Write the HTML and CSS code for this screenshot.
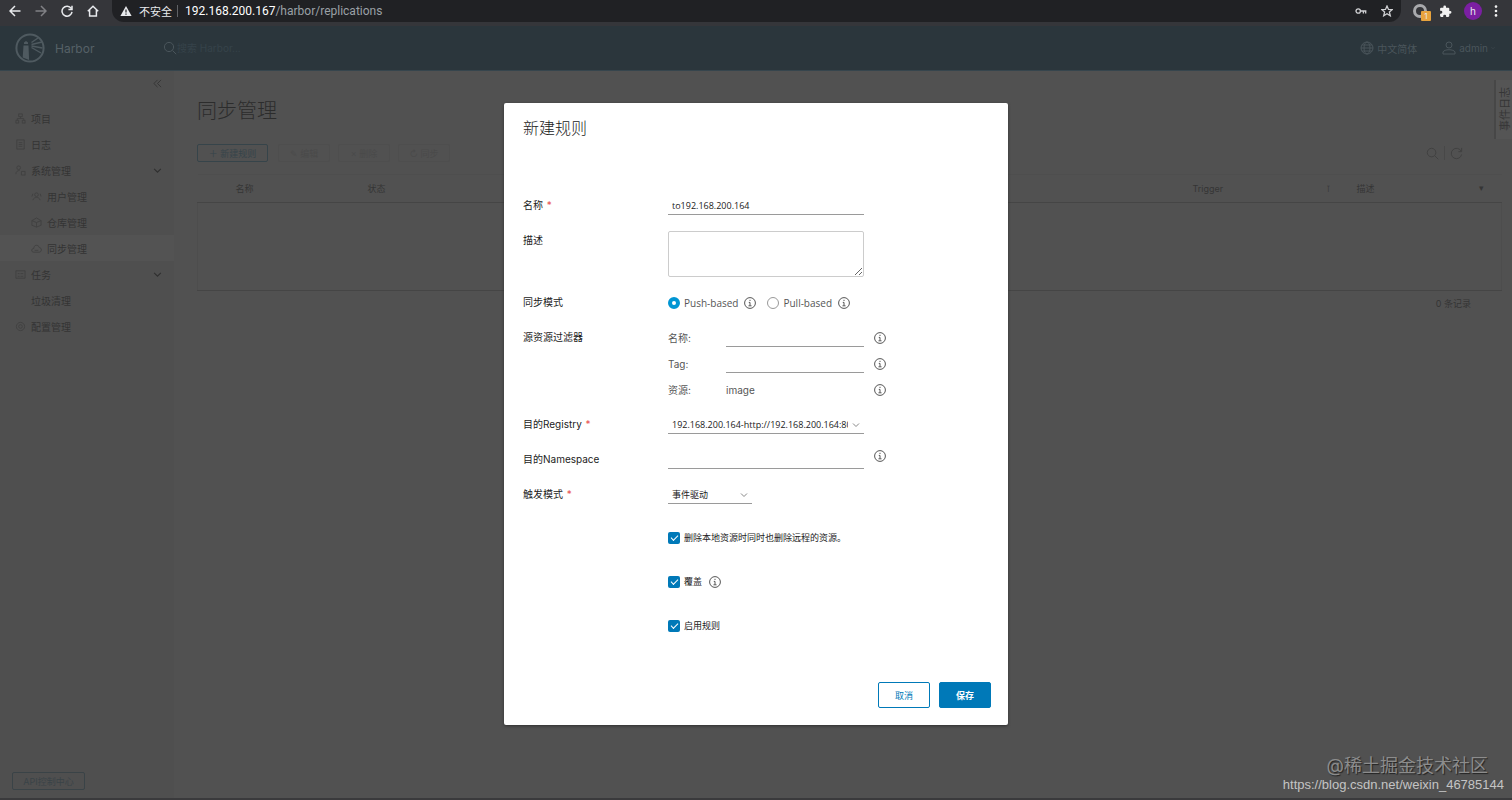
FILE: index.html
```html
<!DOCTYPE html>
<html lang="zh-CN">
<head>
    <meta charset="UTF-8">
    <meta name="viewport" content="width=device-width, initial-scale=1.0">
    <title>Harbor</title>
    <link rel="stylesheet" href="styles.css">
</head>
<body>
    <svg class="sprite" aria-hidden="true">
        <symbol id="info" viewBox="0 0 12 12"><circle cx="6" cy="6" r="5.400"/><path d="M6 2.800v1.200M4.800 5.400H6v3.200M4.500 8.800h3"/></symbol>
        <symbol id="down" viewBox="0 0 8 8"><path d="M1 2.500l3 3 3-3"/></symbol>
        <symbol id="search" viewBox="0 0 14 14"><circle cx="6" cy="6" r="4.600"/><path d="M9.500 9.500l3.700 3.700"/></symbol>
    </svg>

    <div class="browser">
        <button class="nav-btn" aria-label="后退"><svg viewBox="0 0 12 12"><path d="M11.500 6H1M6 1L1 6l5 5"/></svg></button>
        <button class="nav-btn muted" aria-label="前进"><svg viewBox="0 0 12 12"><path d="M.5 6H11M6 1l5 5-5 5"/></svg></button>
        <button class="nav-btn" aria-label="刷新"><svg viewBox="0 0 12 12"><path d="M10.200 3.400A5 5 0 1 0 11 6.800M11 .8v3.600H7.400"/></svg></button>
        <button class="nav-btn" aria-label="主页"><svg viewBox="0 0 12 12"><path d="M.8 6.200L6 1.200l5.200 5M2.600 5v6h6.800V5"/></svg></button>
        <div class="address">
            <svg class="warn" viewBox="0 0 12 12"><path d="M6 1l5.600 10H.4z" fill="#e8eaed"/><path d="M6 4.600v3M6 8.600v1.200" stroke="#202124" stroke-width="1.200"/></svg>
            <span class="insecure">不安全</span>
            <span class="bar"></span>
            <span class="url"><b>192.168.200.167</b>/harbor/replications</span>
            <svg class="key" viewBox="0 0 12 12"><circle cx="3.200" cy="6" r="2.200"/><path d="M5.400 6h6M8.400 6v2.500M10.700 6v2.500"/></svg>
            <svg class="star" viewBox="0 0 12 12"><path d="M6 1l1.500 3.400 3.700.3-2.800 2.400.9 3.700L6 8.800l-3.300 2 .9-3.700L.8 4.700l3.700-.3z"/></svg>
        </div>
        <div class="extensions">
            <span class="ext-ring"><i>1</i></span>
            <svg class="puzzle" viewBox="0 0 24 24"><path d="M20.500 11H19V7a2 2 0 0 0-2-2h-4V3.500a2.500 2.500 0 0 0-5 0V5H4a2 2 0 0 0-2 2v3.800h1.500a2.700 2.700 0 0 1 0 5.400H2V20c0 1.100.9 2 2 2h3.800v-1.500a2.700 2.700 0 0 1 5.400 0V22H17a2 2 0 0 0 2-2v-4h1.500a2.500 2.500 0 0 0 0-5z"/></svg>
            <span class="avatar">h</span>
            <svg class="dots" viewBox="0 0 4 12"><circle cx="2" cy="1.600" r="1.300"/><circle cx="2" cy="6" r="1.300"/><circle cx="2" cy="10.400" r="1.300"/></svg>
        </div>
    </div>

    <div class="app">
        <header class="header">
            <svg class="logo" viewBox="0 0 30 30"><circle cx="15" cy="15" r="13.600"/><path class="solid" d="M8.500 12.500h5l.6 14.500-6.400-2.500zM9 11V9.500L11 8l2 1.500V11z"/><path class="beam" d="M16.500 9.500L23 5M16.500 11.500L27 9M16.500 13l11 2M16.500 14.500L26 20"/></svg>
            <span class="brand">Harbor</span>
            <label class="search"><svg class="line"><use href="#search"/></svg><input type="text" placeholder="搜索 Harbor..." aria-label="搜索"></label>
            <a class="head-link" href="#"><svg class="line" viewBox="0 0 14 14"><circle cx="7" cy="7" r="6"/><ellipse cx="7" cy="7" rx="3" ry="6"/><path d="M1 7h12M2 4h10M2 10h10"/></svg>中文简体</a>
            <a class="head-link" href="#"><svg class="line" viewBox="0 0 14 14"><circle cx="7" cy="4" r="3"/><path d="M1 13v-2c1-3 11-3 12 0v2z"/></svg>admin<svg class="caret line"><use href="#down"/></svg></a>
        </header>

        <div class="content">
            <nav class="sidebar">
                <button class="collapse" aria-label="收起"><svg class="line" viewBox="0 0 10 10"><path d="M5 1L1 5l4 4M9 1L5 5l4 4"/></svg></button>
                <a href="#"><svg class="line" viewBox="0 0 12 12"><path d="M4 1h4v3H4zM1 8h3v3H1zM8 8h3v3H8zM6 4v2M2.500 8V6h7v2"/></svg>项目</a>
                <a href="#"><svg class="line" viewBox="0 0 12 12"><path d="M2 1h8v10H2zM4 4h4M4 6h4M4 8h4"/></svg>日志</a>
                <a href="#"><svg class="line" viewBox="0 0 12 12"><circle cx="4" cy="3" r="2"/><path d="M1 10c0-3 2-4 4-4M7 7h4v4H7z"/></svg>系统管理<svg class="caret line"><use href="#down"/></svg></a>
                <a class="sub" href="#"><svg class="line" viewBox="0 0 12 12"><circle cx="6" cy="4" r="2"/><path d="M2 10c1-4 7-4 8 0M1 6l1-3M11 6l-1-3"/></svg>用户管理</a>
                <a class="sub" href="#"><svg class="line" viewBox="0 0 12 12"><path d="M6 1l5 3v5l-5 2-5-2V4zM1 4l5 2 5-2M6 6v5"/></svg>仓库管理</a>
                <a class="sub active" href="#"><svg class="line" viewBox="0 0 12 12"><path d="M3 10C0 10 0 6 3 6c0-5 6-4 6-1 3 0 3 5 0 5zM4 8h4"/></svg>同步管理</a>
                <a href="#"><svg class="line" viewBox="0 0 12 12"><path d="M1 2h10v8H1zM3 5h2M6 5h3M3 8h2M6 8h3"/></svg>任务<svg class="caret line"><use href="#down"/></svg></a>
                <a class="sub" href="#">垃圾清理</a>
                <a href="#"><svg class="line" viewBox="0 0 12 12"><circle cx="6" cy="6" r="4.500"/><circle cx="6" cy="6" r="2"/></svg>配置管理</a>
                <button class="api">API控制中心</button>
            </nav>

            <main class="main">
                <h1>同步管理</h1>
                <div class="toolbar">
                    <button class="primary">＋ 新建规则</button>
                    <button disabled>✎ 编辑</button>
                    <button disabled>× 删除</button>
                    <button disabled>↻ 同步</button>
                    <span class="tools"><svg class="line"><use href="#search"/></svg><i></i><svg class="line" viewBox="0 0 14 14"><path d="M12 4.500A5.600 5.600 0 1 0 12.500 8M12.500 1v4H9"/></svg></span>
                </div>
                <table class="grid">
                    <colgroup><col class="c1"><col class="c2"><col><col class="c4"><col class="c5"></colgroup>
                    <thead>
                        <tr><th>名称</th><th>状态</th><th></th><th>Trigger <small>⊺</small></th><th>描述 <small>▾</small></th></tr>
                    </thead>
                    <tbody><tr><td colspan="5"></td></tr></tbody>
                </table>
                <div class="records">0 条记录</div>
            </main>
            <button class="events">事件日志</button>
        </div>

        <div class="backdrop">
            <form class="modal" onsubmit="return false">
                <h2>新建规则</h2>
                <div class="fields">
                    <div class="row">
                        <label class="label" for="name">名称 <em>*</em></label>
                        <input class="text" id="name" type="text" value="to192.168.200.164">
                    </div>
                    <div class="row tall">
                        <label class="label" for="desc">描述</label>
                        <textarea id="desc"></textarea>
                    </div>
                    <div class="row">
                        <span class="label">同步模式</span>
                        <label class="radio"><input type="radio" name="mode" checked>Push-based</label>
                        <svg class="info push"><use href="#info"/></svg>
                        <label class="radio"><input type="radio" name="mode">Pull-based</label>
                        <svg class="info"><use href="#info"/></svg>
                    </div>
                    <div class="filters">
                        <span class="label">源资源过滤器</span>
                        <div class="filter-list">
                            <div class="row"><label class="small" for="f-name">名称:</label><input class="text" id="f-name" type="text"><svg class="info side"><use href="#info"/></svg></div>
                            <div class="row"><label class="small" for="f-tag">Tag:</label><input class="text" id="f-tag" type="text"><svg class="info side"><use href="#info"/></svg></div>
                            <div class="row"><span class="small">资源:</span><span class="value">image</span><svg class="info side"><use href="#info"/></svg></div>
                        </div>
                    </div>
                    <div class="row">
                        <label class="label" for="registry">目的Registry <em>*</em></label>
                        <span class="select"><select id="registry"><option>192.168.200.164-http://192.168.200.164:80</option></select><svg class="caret line"><use href="#down"/></svg></span>
                    </div>
                    <div class="row">
                        <label class="label" for="ns">目的Namespace</label>
                        <input class="text" id="ns" type="text">
                        <svg class="info side top"><use href="#info"/></svg>
                    </div>
                    <div class="row">
                        <label class="label" for="trigger">触发模式 <em>*</em></label>
                        <span class="select short"><select id="trigger"><option>事件驱动</option></select><svg class="caret line"><use href="#down"/></svg></span>
                    </div>
                </div>
                <div class="checks">
                    <label class="check"><input type="checkbox" checked>删除本地资源时同时也删除远程的资源。</label>
                    <label class="check"><input type="checkbox" checked>覆盖<svg class="info"><use href="#info"/></svg></label>
                    <label class="check"><input type="checkbox" checked>启用规则</label>
                </div>
                <div class="actions">
                    <button type="button" class="btn">取消</button>
                    <button type="submit" class="btn save">保存</button>
                </div>
            </form>
        </div>

        <div class="watermark">
            <span class="mark">@稀土掘金技术社区</span>
            <span class="link">https://blog.csdn.net/weixin_46785144</span>
        </div>
    </div>
</body>
</html>
```

FILE: styles.css
```css
* {
    box-sizing: border-box;
}

body {
    margin: 0;
    min-height: 100vh;
    display: flex;
    flex-direction: column;
    background: #515151;
    color: #353535;
    font-family: Inter, "Noto Sans CJK SC", sans-serif;
    font-size: 10px;
}

button, input, select, textarea {
    margin: 0;
    padding: 0;
    border: 0;
    background: none;
    color: inherit;
    font: inherit;
}

a {
    color: inherit;
    text-decoration: none;
}

svg {
    flex: none;
}

.sprite {
    position: absolute;
    width: 0;
    height: 0;
}

.line {
    fill: none;
    stroke: currentColor;
}

/* browser bar */
.browser {
    display: flex;
    align-items: center;
    height: 26px;
    padding: 0 14px 4px 8px;
    background: #35363a;
    color: #e8eaed;
}

.nav-btn {
    width: 26px;
    height: 22px;
    padding: 5px 1px;
    text-align: left;
}

.nav-btn svg {
    display: block;
    width: 12px;
    height: 12px;
    fill: none;
    stroke: #e8eaed;
    stroke-width: 1.5;
}

.nav-btn.muted svg {
    stroke: #808185;
}

.address {
    flex: 1;
    display: flex;
    align-items: center;
    height: 22px;
    padding: 0 8px;
    border-radius: 0 0 12px 12px;
    background: #202124;
    font-family: Roboto, "Noto Sans CJK SC", sans-serif;
    font-size: 12px;
}

.address svg {
    width: 12px;
    height: 12px;
}

.insecure {
    margin-left: 7px;
    font-size: 11px;
}

.bar {
    width: 1px;
    height: 12px;
    margin: 0 7px 0 5px;
    background: #606266;
}

.url {
    flex: 1;
    color: #9aa0a6;
}

.url b {
    color: #fff;
    font-weight: normal;
}

.key, .star {
    fill: none;
    stroke: #d0d1d4;
    stroke-width: 1.3;
}

.star {
    margin-left: 14px;
}

.extensions {
    display: flex;
    align-items: center;
    gap: 12px;
    padding-left: 12px;
}

.ext-ring {
    position: relative;
    width: 14px;
    height: 14px;
    border: 3px solid #a8a9ac;
    border-radius: 50%;
}

.ext-ring i {
    position: absolute;
    left: 5px;
    top: 4px;
    width: 10px;
    height: 10px;
    border-radius: 1px;
    background: #e8a33d;
    font-size: 8px;
    font-style: normal;
    line-height: 10px;
    text-align: center;
}

.puzzle {
    width: 13px;
    height: 13px;
    fill: #f1f1f1;
}

.avatar {
    width: 18px;
    height: 18px;
    border-radius: 50%;
    background: #7b1fa2;
    line-height: 18px;
    text-align: center;
}

.dots {
    width: 4px;
    height: 12px;
    fill: #f1f1f1;
}

/* harbor shell */
.app {
    position: relative;
    flex: 1;
    display: flex;
    flex-direction: column;
    border-bottom: 2px solid #3a3a3c;
}

.header {
    display: flex;
    align-items: center;
    height: 45px;
    padding: 0 17px 0 15px;
    background: #2b363c;
    border-bottom: 1px solid #36454d;
    color: #4a555b;
}

.logo {
    width: 30px;
    height: 30px;
    fill: none;
    stroke: #4f5a60;
    stroke-width: 2;
}

.logo .solid {
    fill: #4f5a60;
    stroke: none;
}

.logo .beam {
    stroke-width: 1.4;
}

.brand {
    width: 108px;
    margin-left: 10px;
    color: #566167;
    font-size: 12px;
}

.header .line {
    width: 14px;
    height: 14px;
}

.search {
    flex: 1;
    display: flex;
    align-items: center;
}

.search input::placeholder {
    color: #36434a;
}

.head-link {
    display: flex;
    align-items: center;
    gap: 3px;
    margin-left: 25px;
}

.header .caret {
    width: 4px;
    height: 4px;
}

.content {
    flex: 1;
    display: flex;
}

.sidebar {
    display: flex;
    flex-direction: column;
    width: 174px;
    padding-bottom: 8px;
    background: #4f4f4f;
    color: #343434;
}

.sidebar a {
    display: flex;
    align-items: center;
    gap: 5px;
    height: 26px;
    padding: 0 12px 0 15px;
}

.sidebar a.sub {
    padding-left: 31px;
}

.sidebar a.active {
    background: #535353;
}

.sidebar svg {
    width: 11px;
    height: 11px;
    color: #414141;
}

.sidebar .caret {
    width: 9px;
    height: 9px;
    margin-left: auto;
    color: #303030;
}

.sidebar .collapse {
    align-self: flex-end;
    width: 21px;
    height: 26px;
    margin-bottom: 8px;
    text-align: left;
}

.collapse svg {
    width: 9px;
    height: 9px;
    color: #343434;
}

.api {
    align-self: flex-start;
    width: 73px;
    height: 18px;
    margin: auto 0 0 12px;
    border: 1px solid #3a4347;
    border-radius: 2px;
    color: #3a4347;
    font-size: 9px;
}

.main {
    flex: 1;
    padding: 25px 10px 0 23px;
}

h1 {
    margin: 0;
    color: #2c2c2c;
    font-size: 20px;
    font-weight: 300;
    line-height: 30px;
}

.toolbar {
    display: flex;
    align-items: center;
    gap: 8px;
    margin-top: 18px;
}

.toolbar button {
    width: 52px;
    height: 18px;
    border: 1px solid #4e4e4e;
    border-radius: 2px;
    color: #4a4a4a;
    font-size: 9px;
}

.toolbar .primary {
    width: 71px;
    margin-right: 2px;
    border-color: #36444a;
    color: #36444a;
}

.tools {
    display: flex;
    align-items: center;
    gap: 5px;
    margin: 0 39px 0 auto;
    color: #404040;
}

.tools svg {
    width: 13px;
    height: 13px;
}

.tools i {
    width: 1px;
    height: 14px;
    background: #484848;
}

.grid {
    width: 100%;
    margin-top: 12px;
    border-collapse: collapse;
    table-layout: fixed;
}

.grid .c1 {
    width: 152px;
}

.grid .c2 {
    width: 200px;
}

.grid .c4 {
    width: 164px;
}

.grid .c5 {
    width: 163px;
}

.grid th {
    height: 28px;
    padding: 0 8px 0 18px;
    border-top: 1px solid #4e4e4e;
    border-bottom: 1px solid #454545;
    font-size: 9px;
    font-weight: normal;
    text-align: left;
}

.grid th:first-child {
    padding-left: 38px;
}

.grid th:last-child {
    padding-right: 18px;
}

.grid small {
    float: right;
    font-size: 9px;
}

.grid td {
    height: 88px;
    border: 1px solid #4d4d4d;
    border-bottom-color: #454545;
}

.records {
    padding: 6px 31px 0 0;
    font-size: 9px;
    text-align: right;
}

.events {
    position: absolute;
    top: 54px;
    right: 0;
    width: 18px;
    height: 59px;
    border-right: 2px solid #474747;
    background: #555;
    font-size: 11px;
    writing-mode: vertical-rl;
    text-orientation: sideways;
    transform: rotate(180deg);
}

/* dialog */
.backdrop {
    position: absolute;
    inset: 0;
    display: flex;
    align-items: center;
    justify-content: center;
    padding-top: 4px;
}

.modal {
    width: 504px;
    padding: 13px 17px 17px 19px;
    border-radius: 2px;
    background: #fff;
    box-shadow: 0 1px 3px #303030;
    color: #222;
}

.modal h2 {
    margin: 0 0 56px;
    color: #222;
    font-size: 16px;
    font-weight: 300;
    line-height: 24px;
}

.fields {
    display: flex;
    flex-direction: column;
    gap: 16px;
}

.row {
    display: flex;
    align-items: center;
    height: 19px;
}

.row.tall {
    align-items: flex-start;
    height: 46px;
}

.label {
    flex: none;
    width: 145px;
    line-height: 19px;
}

.label em {
    margin-left: 1px;
    color: #e85050;
    font-style: normal;
}

.text {
    width: 196px;
    height: 19px;
    padding: 0 4px;
    border-bottom: 1px solid #9a9a9a;
    font-family: "Open Sans", sans-serif;
    font-size: 9px;
}

textarea {
    width: 196px;
    height: 46px;
    border: 1px solid #ccc;
    border-radius: 2px;
}

.info {
    width: 12px;
    height: 12px;
    fill: none;
    stroke: #555;
}

.info.side {
    margin-left: 10px;
}

.info.top {
    align-self: flex-start;
}

.info.push {
    margin-right: 11px;
}

.radio {
    display: flex;
    align-items: center;
    gap: 4px;
    margin-right: 6px;
    color: #565656;
    font-family: "Open Sans", sans-serif;
}

.radio input {
    appearance: none;
    width: 12px;
    height: 12px;
    border: 1px solid #999;
    border-radius: 50%;
}

.radio input:checked {
    border: 4px solid #0095d3;
}

.filters {
    display: flex;
}

.filter-list {
    display: flex;
    flex-direction: column;
    gap: 7px;
    color: #565656;
}

.small {
    width: 58px;
}

.filter-list .text, .value {
    width: 138px;
}

.select {
    position: relative;
    width: 196px;
}

.select.short {
    width: 84px;
}

.select select {
    display: block;
    appearance: none;
    width: 100%;
    height: 19px;
    padding: 0 16px 0 4px;
    border-bottom: 1px solid #9a9a9a;
    font-family: "Open Sans", "Noto Sans CJK SC", sans-serif;
    font-size: 9px;
}

.select .caret {
    position: absolute;
    top: 6px;
    right: 4px;
    width: 8px;
    height: 8px;
    color: #888;
    pointer-events: none;
}

.checks {
    display: flex;
    flex-direction: column;
    gap: 25px;
    margin: 24px 0 47px 145px;
}

.check {
    display: flex;
    align-items: center;
    gap: 4px;
    height: 19px;
    font-size: 9px;
}

.check .info {
    margin-left: 3px;
}

.check input {
    appearance: none;
    display: grid;
    place-items: center;
    width: 12px;
    height: 12px;
    border-radius: 2px;
    background: #0079b8;
}

.check input:checked::after {
    content: "";
    width: 6px;
    height: 3px;
    margin-bottom: 2px;
    border-left: 1px solid #fff;
    border-bottom: 1px solid #fff;
    transform: rotate(-45deg);
}

.actions {
    display: flex;
    justify-content: flex-end;
    gap: 9px;
}

.btn {
    width: 52px;
    height: 26px;
    border: 1px solid #0079b8;
    border-radius: 2px;
    color: #0079b8;
    font-size: 9px;
}

.btn.save {
    background: #0079b8;
    color: #fff;
    font-weight: bold;
}

.watermark {
    position: absolute;
    right: 8px;
    bottom: 5px;
    display: flex;
    flex-direction: column;
    align-items: flex-end;
}

.mark {
    margin-right: 16px;
    color: #8c8c8c;
    font-size: 18px;
    line-height: 22px;
    text-shadow: 1px 1px 1px #222;
}

.link {
    color: #c4c4c4;
    font-family: "Liberation Sans", sans-serif;
    font-size: 13px;
    line-height: 16px;
}
```
